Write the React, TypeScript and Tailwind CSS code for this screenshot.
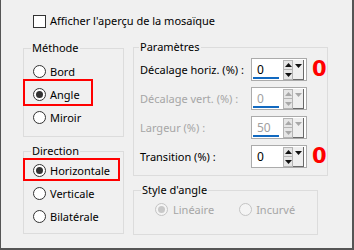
import React from 'react';

const Radio = ({ checked = false, disabled = false }: { checked?: boolean; disabled?: boolean }) => (
  <span
    className={`flex items-center justify-center w-[13px] h-[13px] rounded-full border shrink-0 ${
      disabled ? 'border-[#c4c4c4] bg-[#f4f4f4]' : 'border-[#333333] bg-white'
    }`}
  >
    {checked && (
      <span className={`w-[7px] h-[7px] rounded-full ${disabled ? 'bg-[#c8c8c8]' : 'bg-[#333333]'}`} />
    )}
  </span>
);

const Tri = ({ up = false, color }: { up?: boolean; color: string }) => (
  <svg width="7" height="4" viewBox="0 0 7 4">
    {up ? <polygon points="0,4 7,4 3.5,0" fill={color} /> : <polygon points="0,0 7,0 3.5,4" fill={color} />}
  </svg>
);

const Spin = ({ value, disabled = false, underline = true }: { value: string; disabled?: boolean; underline?: boolean }) => {
  const c = disabled ? '#a8a8a8' : '#111111';
  return (
    <div className="relative w-[56px] h-[23px] border border-[#ababab] bg-white flex">
      <div className={`w-[31px] pl-[5px] text-[12px] leading-[21px] ${disabled ? 'text-[#a0a0a0]' : 'text-black'}`}>{value}</div>
      {underline && <div className="absolute left-[1px] bottom-[1px] w-[26px] h-[2px] bg-[#1169c0]" />}
      <div className="flex flex-col mt-[1px] w-[10px]">
        <div className="h-[10px] flex items-center justify-center bg-[#e6e6e6] border border-[#b4b4b4]">
          <Tri up color={c} />
        </div>
        <div className="h-[10px] flex items-center justify-center bg-[#e6e6e6] border border-t-0 border-[#b4b4b4]">
          <Tri color={c} />
        </div>
      </div>
      <div className="mt-[1px] w-[11px] h-[20px] flex justify-center pt-[4px] bg-[#efefef] border-r border-b border-[#6a6a6a]">
        <Tri color={c} />
      </div>
    </div>
  );
};

const Row = ({ label, value, disabled = false, underline = true, mark = false }: { label: string; value: string; disabled?: boolean; underline?: boolean; mark?: boolean }) => (
  <div className="flex items-center h-[23px]">
    <div className={`w-[111px] whitespace-nowrap ${disabled ? 'text-[#a6a6a6]' : 'text-black'}`}>{label}</div>
    <Spin value={value} disabled={disabled} underline={underline} />
    {mark && (
      <span className="ml-[5px] text-[21px] leading-[21px] font-bold text-[#ff0000] font-['DejaVu_Sans',sans-serif]">0</span>
    )}
  </div>
);

export default function App() {
  return (
    <div className="w-[354px] h-[250px] bg-[#f0f0f0] border-l border-r-2 border-b-2 border-[#555555] text-[11px] leading-[16px] text-black font-['Noto_Sans',sans-serif] overflow-hidden whitespace-nowrap">
      {/* Checkbox */}
      <div className="flex items-center pt-[13px] pl-[32px] gap-[4px]">
        <span className="w-[13px] h-[13px] border border-[#333333] bg-white" />
        <span className="text-[11px]">Afficher l'aperçu de la mosaïque</span>
      </div>

      <div className="flex pl-[22px] gap-[9px] mt-[11px]">
        {/* Left column */}
        <div className="flex flex-col w-[101px] gap-[6px]">
          <fieldset className="h-[97px] border border-[#dcdcdc] pl-[9px]">
            <legend className="ml-[-2px] px-[1px]">Méthode</legend>
            <div className="pt-[4px]">
              <div className="flex items-center gap-[4px] h-[23px]">
                <Radio />
                <span>Bord</span>
              </div>
              <div className="relative flex items-center gap-[4px] h-[23px]">
                <Radio checked />
                <span>Angle</span>
                <div className="absolute left-[-10px] top-[-4px] w-[70px] h-[27px] border-2 border-[#ff0000]" />
              </div>
              <div className="flex items-center gap-[4px] h-[23px]">
                <Radio />
                <span>Miroir</span>
              </div>
            </div>
          </fieldset>

          <fieldset className="h-[91px] border border-[#dcdcdc] pl-[9px]">
            <legend className="ml-[-2px] px-[1px]">Direction</legend>
            <div className="relative flex items-center gap-[4px] h-[23px]">
              <Radio checked />
              <span>Horizontale</span>
              <div className="absolute left-[-10px] top-[-1px] w-[97px] h-[23px] border-2 border-[#ff0000]" />
            </div>
            <div className="flex items-center gap-[4px] h-[23px]">
              <Radio />
              <span>Verticale</span>
            </div>
            <div className="flex items-center gap-[4px] h-[23px]">
              <Radio />
              <span>Bilatérale</span>
            </div>
          </fieldset>
        </div>

        {/* Right column */}
        <div className="flex flex-col w-[185px] -mt-[1px] gap-[6px]">
          <fieldset className="h-[137px] border border-[#dcdcdc] pl-[6px]">
            <legend className="ml-[-1px] px-[1px]">Paramètres</legend>
            <div className="flex flex-col gap-[6px] pt-[3px]">
              <Row label="Décalage horiz. (%) :" value="0" mark />
              <Row label="Décalage vert. (%) :" value="0" disabled />
              <Row label="Largeur (%) :" value="50" disabled />
              <Row label="Transition (%) :" value="0" underline={false} mark />
            </div>
          </fieldset>

          <fieldset className="h-[53px] border border-[#dcdcdc] pl-[21px]">
            <legend className="ml-[-14px] px-[1px]">Style d'angle</legend>
            <div className="flex items-center h-[23px]">
              <Radio checked disabled />
              <span className="ml-[5px] text-[#a6a6a6]">Linéaire</span>
              <span className="ml-[25px]"><Radio disabled /></span>
              <span className="ml-[4px] text-[#a6a6a6]">Incurvé</span>
            </div>
          </fieldset>
        </div>
      </div>
    </div>
  );
}
